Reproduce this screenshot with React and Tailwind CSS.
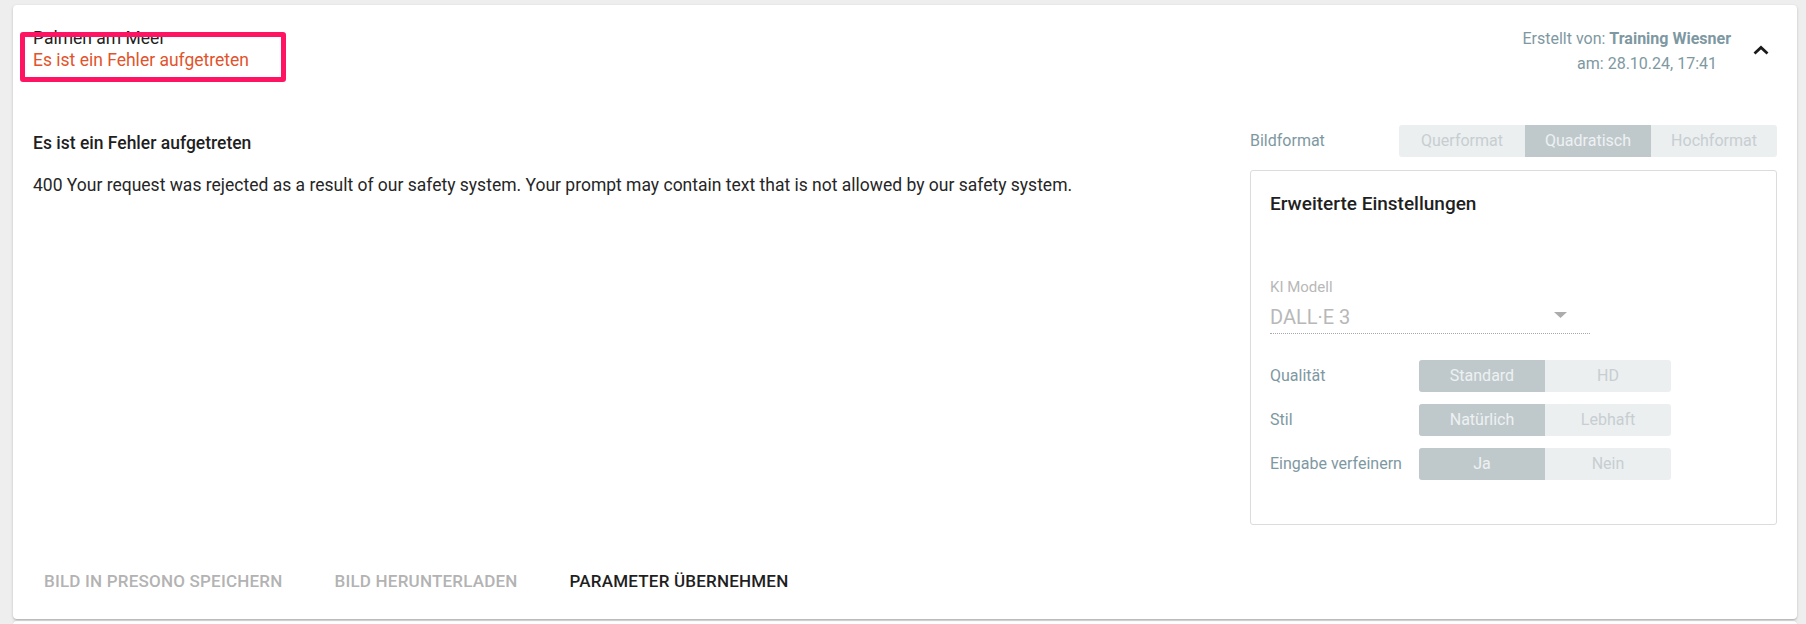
import { useState } from 'react';

// segmented toggle used for Bildformat and the advanced settings rows
const Segmented = ({ options, value, width }) => (
  <div className="flex h-[32px] rounded-[3px] overflow-hidden bg-[#eceff0]" style={{ width }}>
    {options.map((o) => {
      const active = o === value;
      return (
        <button key={o} type="button"
          className={active
            ? 'flex-1 grid place-items-center bg-[#bfc9cc] text-[#eef1f2] text-[16px]'
            : 'flex-1 grid place-items-center text-[#c6ced1] text-[16px]'}>
          {o}
        </button>
      );
    })}
  </div>
);

const settings = [
  { label: 'Qualität', options: ['Standard', 'HD'], value: 'Standard' },
  { label: 'Stil', options: ['Natürlich', 'Lebhaft'], value: 'Natürlich' },
  { label: 'Eingabe verfeinern', options: ['Ja', 'Nein'], value: 'Ja' },
];

export default function App() {
  const [format] = useState('Quadratisch');

  return (
    <div className="min-h-screen bg-[#eeeeee] pt-[5px] pl-[13px] pr-[9px] font-['Roboto','Liberation_Sans',sans-serif]">
      <div className="relative h-[614px] bg-white rounded-[4px] shadow-[0_1px_3px_rgba(0,0,0,0.18),0_1px_1px_rgba(0,0,0,0.1)] flex flex-col">

        {/* header */}
        <div className="h-[70px] flex justify-between items-start">
          <div className="pl-[20px] pt-[22px]">
            <div className="text-[17.5px] leading-[22px] text-[#222]">Palmen am Meer</div>
            <div className="text-[17.5px] leading-[23px] text-[#e2532b]">Es ist ein Fehler aufgetreten</div>
          </div>
          <div className="flex items-start pt-[21px] pr-[16px]">
            <div className="flex flex-col items-end text-[16px] leading-[25px] text-[#7e98a2]">
              <div>Erstellt von: <span className="font-bold">Training Wiesner</span></div>
              <div className="pr-[14px]">am: 28.10.24, 17:41</div>
            </div>
            <button type="button" aria-label="Einklappen" className="w-[40px] h-[40px] ml-[10px] mt-[4px] grid place-items-center">
              <svg width="16" height="10" viewBox="0 0 16 10">
                <path d="M1.5 8.5 L8 2.5 L14.5 8.5" fill="none" stroke="#1a1a1a" strokeWidth="2.8" />
              </svg>
            </button>
          </div>
        </div>

        {/* body */}
        <div className="flex mt-[50px] px-[20px]">
          <div className="flex-1 pt-[6px]">
            <div className="text-[17.5px] leading-[24px] font-medium text-[#1f1f1f]">Es ist ein Fehler aufgetreten</div>
            <p className="mt-[18px] text-[17.5px] leading-[24px] text-[#262626]">
              400 Your request was rejected as a result of our safety system. Your prompt may contain text that is not allowed by our safety system.
            </p>
          </div>

          <div className="w-[527px] shrink-0">
            <div className="flex items-center justify-between">
              <span className="text-[16px] text-[#7e98a2]">Bildformat</span>
              <Segmented options={['Querformat', 'Quadratisch', 'Hochformat']} value={format} width={378} />
            </div>

            <div className="mt-[13px] h-[355px] border border-[#dcdcdc] rounded-[3px] px-[19px] pt-[21px]">
              <div className="text-[19px] leading-[24px] font-medium text-[#1f1f1f]">Erweiterte Einstellungen</div>

              <div className="mt-[63px] w-[320px]">
                <div className="text-[15px] leading-[16px] text-[#b8b8b8]">KI Modell</div>
                <div className="relative mt-[5px] h-[34px] flex items-center border-b border-dotted border-[#a8a8a8]">
                  <span className="text-[20px] text-[#b8b8b8]">DALL·E 3</span>
                  <svg className="absolute right-[23px] top-[12px]" width="13" height="6" viewBox="0 0 13 6">
                    <path d="M0 0 L13 0 L6.5 6 Z" fill="#acacac" />
                  </svg>
                </div>
              </div>

              <div className="mt-[26px] flex flex-col gap-[12px]">
                {settings.map((s) => (
                  <div key={s.label} className="flex items-center">
                    <span className="w-[149px] text-[16px] text-[#7e98a2]">{s.label}</span>
                    <Segmented options={s.options} value={s.value} width={252} />
                  </div>
                ))}
              </div>
            </div>
          </div>
        </div>

        {/* actions */}
        <div className="flex items-center gap-[30px] px-[20px] mt-[39px]">
          <button type="button" className="px-[11px] h-[36px] text-[17px] tracking-[0.012em] font-medium uppercase text-[#b3b3b3]">Bild in Presono speichern</button>
          <button type="button" className="px-[11px] h-[36px] text-[17px] tracking-[0.012em] font-medium uppercase text-[#b3b3b3]">Bild herunterladen</button>
          <button type="button" className="px-[11px] h-[36px] text-[17px] tracking-[0.012em] font-medium uppercase text-[#1f1f1f]">Parameter übernehmen</button>
        </div>

        {/* highlight annotation */}
        <div className="absolute left-[7px] top-[27px] w-[266px] h-[50px] border-[5px] border-[#ff1464] rounded-[3px] pointer-events-none" />
      </div>

      <div className="mt-[2px] h-[10px] bg-white rounded-t-[4px] shadow-[0_-1px_2px_rgba(0,0,0,0.08)]" />
    </div>
  );
}
